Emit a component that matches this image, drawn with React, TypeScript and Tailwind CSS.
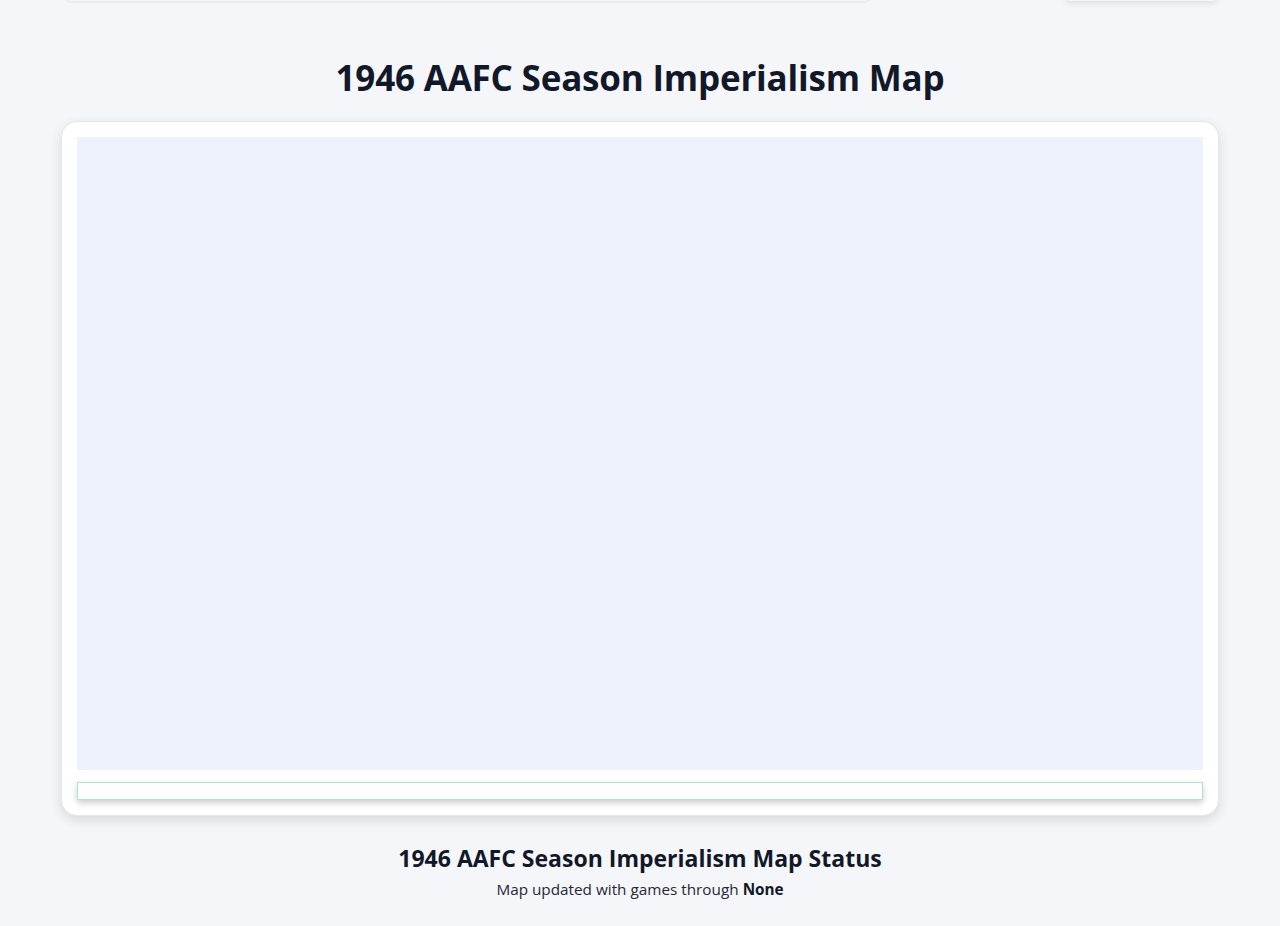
export default function App() {
  return (
    <div className="min-h-[926px] w-full bg-[#f5f6fa] font-['Open_Sans','Noto_Sans',sans-serif] text-[#111827] overflow-hidden">
      {/* header row, mostly scrolled out of view */}
      <div className="-mt-[44px] flex items-end justify-between px-[65px] pr-[62px] h-[45px]">
        <div className="h-[40px] w-[805px] rounded-b-md bg-[#f5f6fa] shadow-[0_1px_3px_rgba(0,0,0,0.08)]" />
        <div className="h-[40px] w-[153px] rounded-md bg-[#f5f6fa] shadow-[0_2px_6px_rgba(0,0,0,0.1)]" />
      </div>

      <h1 className="mt-[57px] text-center text-[35px] font-bold leading-[40px] tracking-[-0.2px]">
        1946 AAFC Season Imperialism Map
      </h1>

      <div className="mx-auto mt-[23px] w-[1158px] rounded-2xl border border-[#e3e8f0] bg-white p-[15px] shadow-[0_4px_12px_rgba(0,0,0,0.12)]">
        <div className="h-[633px] w-full bg-[#edf2fd]" />
        <div className="mt-[12px] h-[18px] w-full border border-[#a8e6cf] bg-white shadow-[0_3px_6px_rgba(0,0,0,0.2)]" />
      </div>

      <div className="mt-[26px] text-center">
        <h2 className="text-[23px] font-bold leading-[32px]">1946 AAFC Season Imperialism Map Status</h2>
        <p className="mt-[4px] text-[15.3px] leading-[22px] text-[#1f2937]">
          Map updated with games through <span className="font-bold text-[#111827]">None</span>
        </p>
      </div>
    </div>
  );
}
